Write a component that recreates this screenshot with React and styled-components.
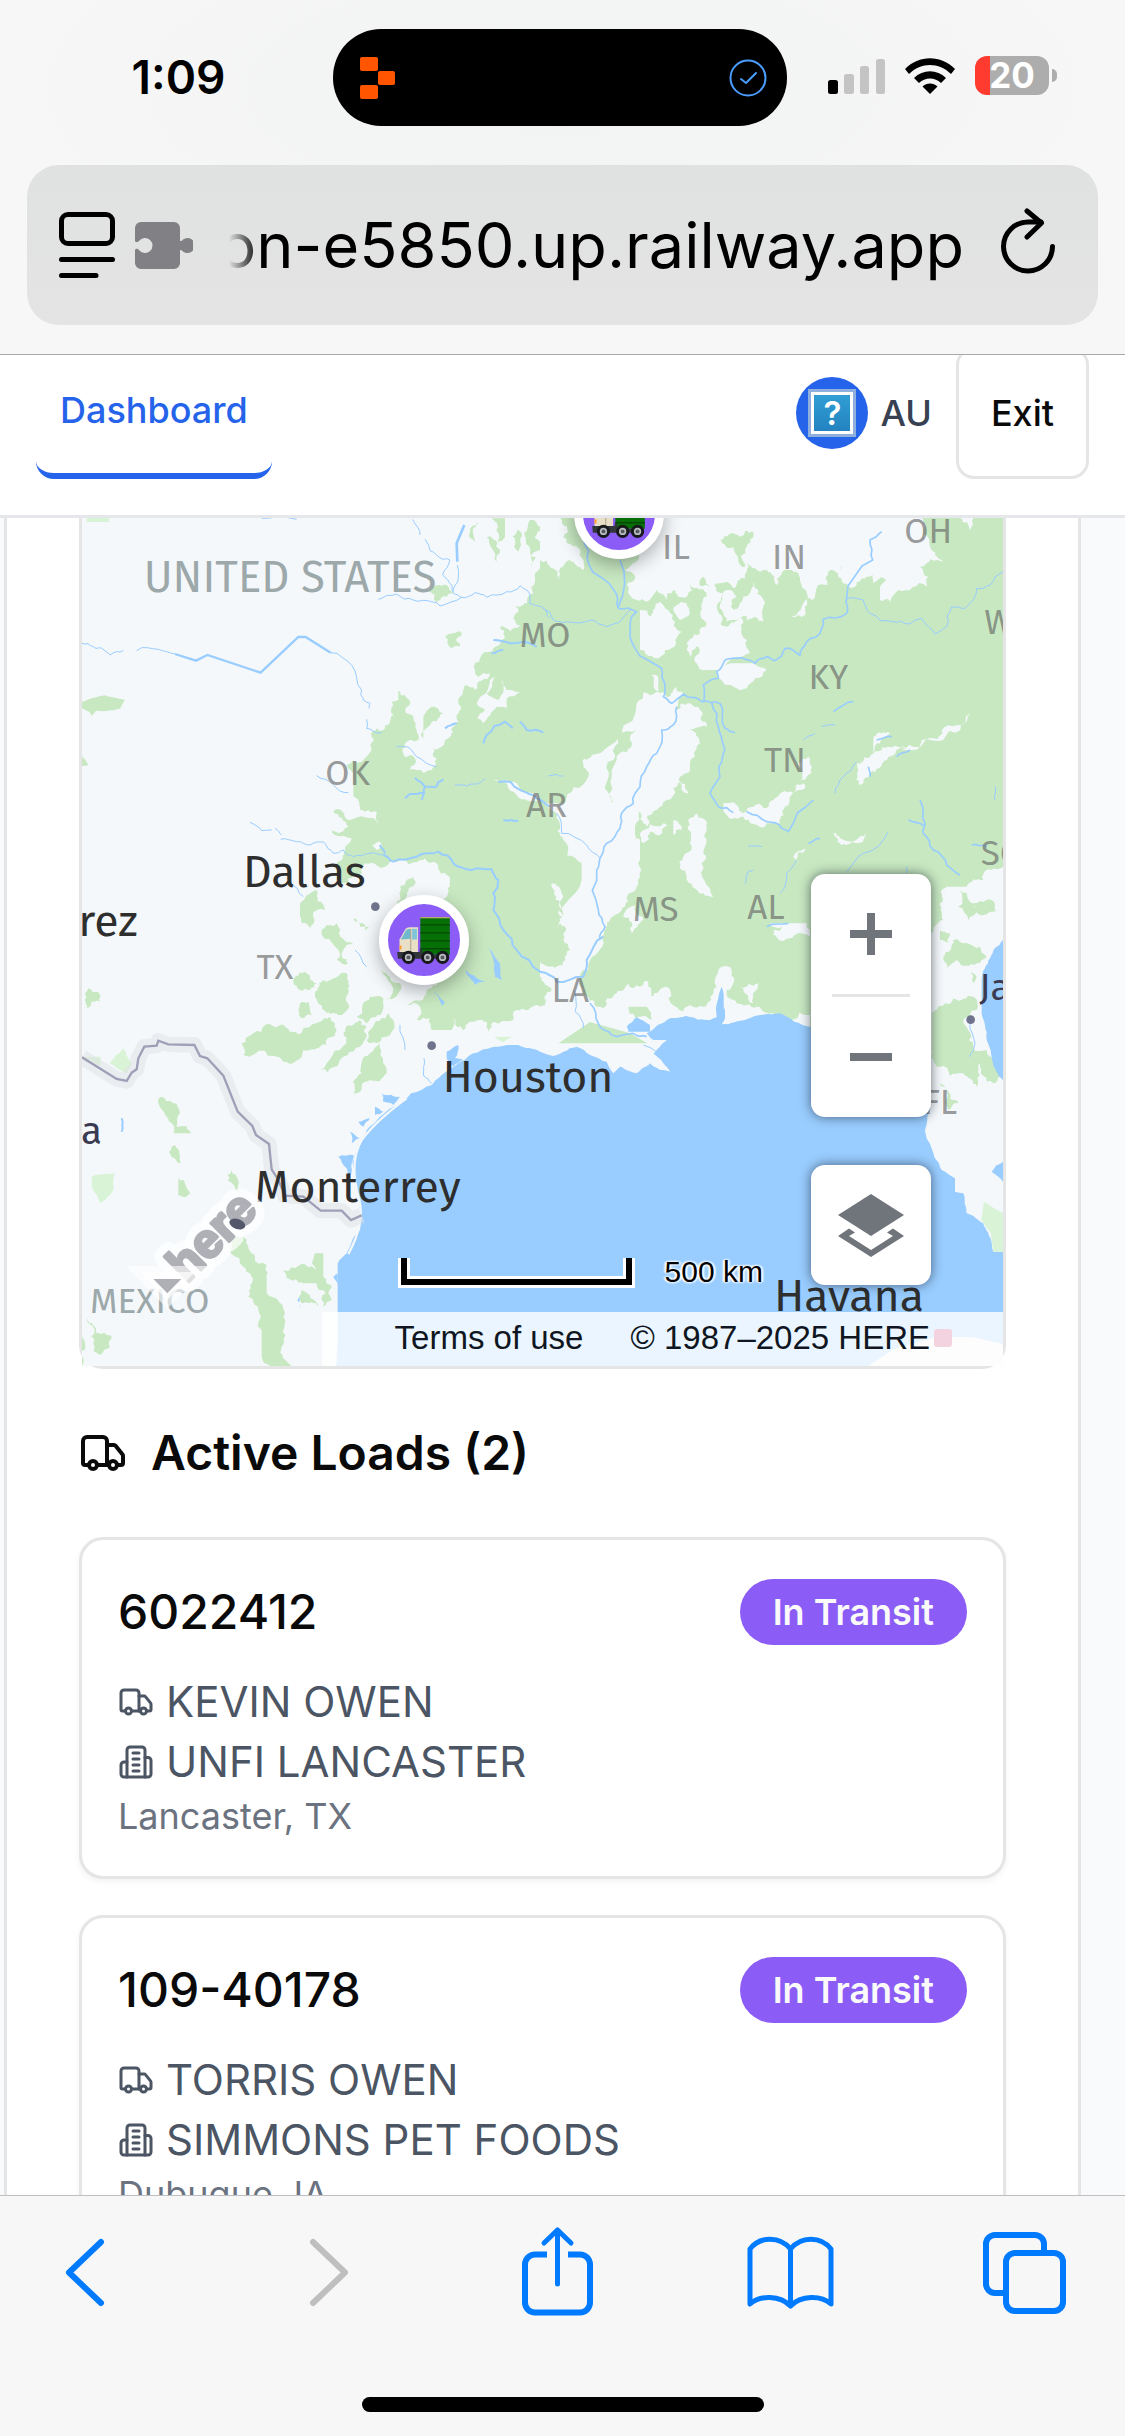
import React from "react";
import styled, { createGlobalStyle } from "styled-components";

const GlobalStyle = createGlobalStyle`
  * { box-sizing: border-box; }
  body { margin: 0; background: #f7f7f7; font-family: Inter, "Liberation Sans", sans-serif; }
  button { font: inherit; color: inherit; background: none; border: 0; padding: 0; margin: 0; cursor: pointer; }
  h2, h3, p { margin: 0; }
  svg { display: block; flex: none; }
`;

const Screen = styled.div`
  height: 100vh;
  display: flex;
  flex-direction: column;
  overflow: hidden;
`;

/* ---------- browser chrome ---------- */

const TopChrome = styled.header`
  flex: none;
  padding-top: 29px;
  background: radial-gradient(ellipse 50% 60% at 50% 25%, #f1f2f2, #f7f7f7);
  border-bottom: 1px solid #a9a9ab;
`;

const StatusBar = styled.div`
  display: grid;
  grid-template-columns: 1fr 454px 1fr;
  align-items: center;
  height: 97px;
  padding-right: 5px;
`;

const Clock = styled.time`
  padding-left: 24px;
  padding-bottom: 2px;
  text-align: center;
  font-size: 46px;
  line-height: 56px;
  font-weight: 600;
`;

const Island = styled.div`
  display: flex;
  align-items: center;
  justify-content: space-between;
  height: 97px;
  padding: 0 20px 0 27px;
  border-radius: 48px;
  background: #000;
`;

const StatusIcons = styled.div`
  display: flex;
  align-items: center;
  gap: 20px;
  padding-left: 41px;
  padding-bottom: 4px;
`;

const Battery = styled.div`
  display: flex;
  align-items: center;
  gap: 3px;
`;

const BatteryBody = styled.div`
  width: 74px;
  height: 39px;
  border-radius: 12px;
  background: linear-gradient(to right, #ff3b30 20%, #adadad 20%);
  color: #fff;
  font-size: 35px;
  line-height: 39px;
  font-weight: 700;
  text-align: center;
`;

const BatteryNub = styled.div`
  width: 5px;
  height: 13px;
  border-radius: 0 6px 6px 0;
  background: #adadad;
`;

const AddressBar = styled.div`
  display: flex;
  align-items: center;
  height: 160px;
  margin: 39px 27px 29px;
  padding: 0 42px 0 32px;
  border-radius: 32px;
  background: linear-gradient(#e0e1e1, #e4e4e4);
`;

const PageMenu = styled.button`
  display: flex;
  align-items: center;
  gap: 20px;
`;

const Address = styled.button`
  flex: 1;
  min-width: 0;
  display: flex;
  justify-content: flex-end;
  margin: 0 36px;
  overflow: hidden;
  font-size: 63px;
  line-height: 84px;
  white-space: nowrap;
  mask-image: linear-gradient(to right, transparent, #000 30px);
`;

/* ---------- web page ---------- */

const Viewport = styled.main`
  flex: 1;
  min-height: 0;
  overflow: hidden;
  background: #f9fafb;
`;

const Nav = styled.nav`
  display: flex;
  align-items: flex-end;
  justify-content: space-between;
  height: 163px;
  padding: 0 36px 36px;
  overflow: hidden;
  background: #fff;
  border-bottom: 3px solid #e5e7eb;
  font-size: 36px;
  line-height: 48px;
  font-weight: 500;
`;

const Tab = styled.a`
  display: flex;
  align-items: center;
  height: 132px;
  padding: 0 24px;
  border-bottom: 6px solid #2563eb;
  border-radius: 18px;
  color: #2563eb;
  text-decoration: none;
`;

const NavEnd = styled.div`
  display: flex;
  align-items: center;
  gap: 24px;
`;

const User = styled.div`
  display: flex;
  align-items: center;
  gap: 12px;
  color: #374151;
`;

const Avatar = styled.span`
  display: grid;
  place-items: center;
  width: 72px;
  height: 72px;
  border-radius: 50%;
  background: #2563eb;
`;

const UnknownGlyph = styled.span`
  display: grid;
  place-items: center;
  width: 48px;
  height: 48px;
  border: 3px solid #8fb0dc;
  background: linear-gradient(#31a0d6, #2280be);
  box-shadow: inset 0 0 0 3px #fff;
  color: #fff;
  font-size: 33px;
  line-height: 36px;
  font-weight: 600;
`;

const ExitButton = styled.button`
  height: 132px;
  padding: 0 32px;
  border: 3px solid #e5e5e5;
  border-radius: 18px;
  color: #0a0a0a;
`;

const Panel = styled.section`
  margin: 0 44px 0 4px;
  padding: 0 72px 72px;
  background: #fff;
  border: 0 solid #e5e5e5;
  border-width: 0 3px;
`;

const MapFrame = styled.div`
  border: 3px solid #e5e5e5;
  border-top: 0;
  border-radius: 0 0 24px 24px;
`;

const MapCanvas = styled.div`
  position: relative;
  height: 848px;
  overflow: hidden;
  font-family: "Liberation Sans", Arial, sans-serif;
  background: #f4f8fb;

  > svg { width: 100%; height: 100%; }
`;

const Pin = styled.button`
  position: absolute;
  left: ${(p) => p.$left}%;
  top: ${(p) => p.$top}px;
  display: grid;
  place-items: center;
  width: 90px;
  height: 90px;
  margin: -45px;
  border: 9px solid #fff;
  border-radius: 50%;
  background: #8b5cf6;
  box-shadow: 0 6px 18px rgba(0, 0, 0, 0.3);
`;

const MapControls = styled.div`
  position: absolute;
  right: 72px;
  bottom: 81px;
  display: grid;
  gap: 48px;
`;

const ControlGroup = styled.div`
  display: grid;
  justify-items: center;
  width: 120px;
  border-radius: 14px;
  background: #fff;
  box-shadow: 0 0 12px rgba(15, 22, 33, 0.6);
`;

const ControlButton = styled.button`
  display: grid;
  place-items: center;
  width: 120px;
  height: 120px;
`;

const Divider = styled.span`
  width: 78px;
  height: 3px;
  background: #e5e5e5;
`;

const Scale = styled.div`
  position: absolute;
  right: 240px;
  bottom: 78px;
  display: flex;
  align-items: center;
  gap: 30px;
  color: #000;
  font-size: 30px;
  line-height: 33px;
  text-shadow: 0 0 3px #fff, 0 0 3px #fff, 2px 0 2px #fff, -2px 0 2px #fff;
`;

const Copyright = styled.div`
  position: absolute;
  right: 0;
  bottom: 0;
  display: flex;
  align-items: center;
  height: 54px;
  padding: 0 51px 2px 73px;
  background: rgba(255, 255, 255, 0.8);
  color: #0f1621;
  font-size: 33px;
  line-height: 40px;

  a { margin-right: 47px; color: inherit; text-decoration: none; }
`;

const PinkMark = styled.span`
  width: 18px;
  height: 18px;
  margin-left: 4px;
  border-radius: 3px;
  background: #f3d3df;
`;

const SectionTitle = styled.h2`
  display: flex;
  align-items: center;
  gap: 24px;
  margin: 48px 0;
  color: #0a0a0a;
  font-size: 48px;
  line-height: 72px;
  font-weight: 600;
`;

const LoadList = styled.div`
  display: grid;
  gap: 36px;
`;

const LoadCard = styled.article`
  padding: 36px;
  border: 3px solid #e5e5e5;
  border-radius: 24px;
  background: #fff;
  box-shadow: 0 3px 6px rgba(0, 0, 0, 0.05);
`;

const LoadHead = styled.div`
  display: flex;
  align-items: center;
  justify-content: space-between;
  margin-bottom: 24px;
`;

const LoadNumber = styled.h3`
  color: #0a0a0a;
  font-size: 48px;
  line-height: 72px;
  font-weight: 500;
`;

const Badge = styled.span`
  padding: 9px 33px;
  border-radius: 33px;
  background: #8b5cf6;
  color: #fafafa;
  font-size: 36px;
  line-height: 48px;
  font-weight: 600;
`;

const LoadLine = styled.p`
  display: flex;
  align-items: center;
  gap: 12px;
  color: #4b5563;
  font-size: 42px;
  line-height: 60px;
`;

const LoadPlace = styled.p`
  color: #6b7280;
  font-size: 36px;
  line-height: 48px;
`;

/* ---------- bottom toolbar ---------- */

const Toolbar = styled.footer`
  flex: none;
  border-top: 1px solid #bfbfc1;
  background: #f7f7f7;
`;

const ToolRow = styled.div`
  display: flex;
  justify-content: space-between;
  padding: 28px 56px 77px 41px;
  color: #007aff;
`;

const Tool = styled.button`
  &:disabled { color: #bfbfbf; }
`;

const HomeIndicator = styled.div`
  width: 402px;
  height: 15px;
  margin: 0 auto 24px;
  border-radius: 8px;
  background: #000;
`;

/* ---------- icons ---------- */

const Line = ({ size, width = 2, children }) => (
  <svg width={size} height={size} viewBox="0 0 24 24" fill="none" stroke="currentColor"
    strokeWidth={width} strokeLinecap="round" strokeLinejoin="round" aria-hidden="true">
    {children}
  </svg>
);

const TruckIcon = ({ size }) => (
  <Line size={size}>
    <path d="M14 18V6a2 2 0 0 0-2-2H4a2 2 0 0 0-2 2v11a1 1 0 0 0 1 1h2" />
    <path d="M15 18H9" />
    <path d="M19 18h2a1 1 0 0 0 1-1v-3.65a1 1 0 0 0-.22-.624l-3.48-4.35A1 1 0 0 0 17.52 8H14" />
    <circle cx="17" cy="18" r="2" />
    <circle cx="7" cy="18" r="2" />
  </Line>
);

const BuildingIcon = ({ size }) => (
  <Line size={size}>
    <path d="M6 22V4a2 2 0 0 1 2-2h8a2 2 0 0 1 2 2v18Z" />
    <path d="M6 12H4a2 2 0 0 0-2 2v6a2 2 0 0 0 2 2h2" />
    <path d="M18 9h2a2 2 0 0 1 2 2v9a2 2 0 0 1-2 2h-2" />
    <path d="M10 6h4M10 10h4M10 14h4M10 18h4" />
  </Line>
);

const LogoIcon = () => (
  <svg width="35" height="42" viewBox="0 0 35 42" fill="#ff5500" aria-hidden="true">
    <rect width="18" height="14" rx="2" />
    <rect x="18" y="14" width="17" height="14" rx="2" />
    <rect y="28" width="18" height="14" rx="2" />
  </svg>
);

const CheckIcon = () => (
  <svg width="38" height="38" viewBox="0 0 38 38" fill="none" stroke="#4a9dff" strokeWidth="2"
    strokeLinecap="round" strokeLinejoin="round" aria-hidden="true">
    <circle cx="19" cy="19" r="17.5" />
    <path d="M12 20l5 4 10-10" />
  </svg>
);

const SignalIcon = () => (
  <svg width="57" height="36" viewBox="0 0 57 36" fill="#c4c4c4" aria-hidden="true">
    <rect y="22" width="10" height="14" rx="2.5" fill="#000" />
    <rect x="16" y="16" width="10" height="20" rx="2.5" />
    <rect x="32" y="8" width="9" height="28" rx="2.5" />
    <rect x="48" y="1" width="9" height="35" rx="2.5" />
  </svg>
);

const WifiIcon = () => (
  <svg width="50" height="36" viewBox="0 0 50 36" aria-hidden="true">
    <path d="M0 11C14-3.500 36-3.500 50 11l-4 5C34 4 16 4 4 16z" />
    <path d="M9 20c9-9 23-9 32 0l-5 5c-6-6-16-6-22 0z" />
    <path d="M17.500 28.500c4-4 11-4 15 0L25 36z" />
  </svg>
);

const ReaderIcon = () => (
  <svg width="56" height="66" viewBox="0 0 56 66" fill="none" stroke="#000" strokeWidth="5" strokeLinecap="round" aria-hidden="true">
    <rect x="2.500" y="2.500" width="51" height="29" rx="6.500" />
    <path d="M2.500 47.500h51M2.500 63.500H37" />
  </svg>
);

const PuzzleIcon = () => (
  <svg width="58" height="47" viewBox="0 0 58 47" fill="#808085" aria-hidden="true">
    <path d="M6 0h33a6 6 0 0 1 6 6v12c0 2 2 1 3-.5a7.500 7.500 0 1 1 0 12c-1-1.500-3-2.500-3-.5v12a6 6 0 0 1-6 6H6a6 6 0 0 1-6-6V28c1-2 3-1 4 0a7.500 7.500 0 1 0 0-9c-1 1-3 2-4 0V6a6 6 0 0 1 6-6z" />
  </svg>
);

const ReloadIcon = () => (
  <svg width="56" height="74" viewBox="0 0 56 74" fill="none" stroke="#000" strokeWidth="5" strokeLinecap="round" strokeLinejoin="round" aria-hidden="true">
    <path d="M52.500 38.500A24.500 24.500 0 1 1 28 14h13" />
    <path d="M27 3l14.500 12L27 29" />
  </svg>
);

const ToolIcon = ({ children }) => (
  <svg width="88" height="96" viewBox="0 0 88 96" overflow="visible" fill="none" stroke="currentColor"
    strokeWidth="6" strokeLinecap="round" strokeLinejoin="round" aria-hidden="true">
    {children}
  </svg>
);

const GarbageTruck = () => (
  <svg width="53" height="47" viewBox="978 1220 159 142" aria-hidden="true">
    <path d="M985 1330v-42l18-32q4-5 12-5h26v80z" fill="#e9dfc6" />
    <path d="M989 1288l16-28q3-4 9-4h5v30z" fill="#6fb9cf" />
    <rect x="1023" y="1256" width="15" height="32" fill="#7fc6d8" />
    <path d="M1019 1256v74" stroke="#a9a08c" strokeWidth="3" />
    <rect x="985" y="1306" width="6" height="12" fill="#ff9a2e" />
    <rect x="1048" y="1222" width="89" height="112" fill="#067006" />
    <path d="M1048 1222h89" stroke="#b6a96b" strokeWidth="4" />
    <path d="M1048 1244h89M1048 1268h89M1048 1292h89M1048 1316h89" stroke="#034803" strokeWidth="4" />
    <path d="M978 1326h68v-8h8v16h80v12H980z" fill="#33363b" />
    {[1012, 1070, 1115].map((x) => (
      <g key={x}>
        <circle cx={x} cy="1342" r="20" fill="#17191c" />
        <circle cx={x} cy="1342" r="11" fill="#b9bcc0" />
        <circle cx={x} cy="1342" r="6" fill="#55585c" />
      </g>
    ))}
  </svg>
);

/* ---------- map drawing ---------- */

const parse = (s) => s.trim().split(/\s+/).map((p) => p.split(",").map(Number));

// Breaks every edge into short jagged pieces, the same way on each render.
const rough = (text, amount, closed, depth = 3) => {
  let pts = parse(text);
  let seed = Math.abs(pts[0][0] * 31 + pts[0][1] * 17 + pts.length) + 7;
  const rand = () => {
    seed = (seed * 16807) % 2147483647;
    return seed / 2147483647 - 0.5;
  };
  for (let d = 0; d < depth; d += 1) {
    const out = [];
    pts.forEach((p, i) => {
      out.push(p);
      if (!closed && i === pts.length - 1) return;
      const q = pts[(i + 1) % pts.length];
      const len = Math.hypot(q[0] - p[0], q[1] - p[1]);
      const onFrame = closed && (p[0] === q[0] || p[1] === q[1]);
      if (len < 12 || onFrame) return;
      const k = rand() * amount * 2;
      out.push([(p[0] + q[0]) / 2 - (q[1] - p[1]) * k, (p[1] + q[1]) / 2 + (q[0] - p[0]) * k]);
    });
    pts = out;
  }
  return `M${pts.map((p) => `${Math.round(p[0])} ${Math.round(p[1])}`).join("L")}${closed ? "Z" : ""}`;
};

const Shapes = ({ list, fill, amount = 0.28 }) => (
  <g fill={fill}>{list.map((s) => <path key={s} d={rough(s, amount, true)} />)}</g>
);
const Rivers = ({ list, width = 4, amount = 0.14 }) => (
  <path d={list.map((s) => rough(s, amount, false, 2)).join("")} fill="none" stroke="#99cdff" strokeWidth={width} strokeLinejoin="round" />
);

const LAND = "#f4f8fb";
const FOREST = "#c7e8c1";
const WATER = "#99cdff";

const westForest = [
  "1425,150 1410,175 1395,215 1390,250 1372,280 1325,285 1345,305 1330,325 1350,345 1290,350 1305,380 1270,415 1245,425 1215,460 1225,500 1260,490 1215,540 1185,525 1170,560 1160,615 1165,635 1145,655 1125,690 1090,715 1100,745 1085,780 1060,800 1020,780 1035,745 1003,740 1005,710 1045,690 1040,660 1030,620 1005,600 1018,570 985,542 985,570 965,575 970,615 940,660 905,665 912,690 905,720 880,750 830,765 850,800 850,850 870,900 920,905 925,945 840,930 800,898 790,905 835,950 785,960 845,985 825,1020 800,1060 800,1110 830,1120 850,1100 885,1060 960,1055 1000,1050 1065,1045 1100,1060 1140,1110 1130,1160 1150,1250 1120,1400 1070,1440 1010,1485 1050,1490 1040,1530 1080,1525 1085,1560 1145,1560 1150,1525 1180,1560 1200,1535 1230,1530 1255,1565 1270,1535 1330,1530 1340,1500 1390,1490 1425,1440 1445,1440 1445,150",
  "1200,65 1225,35 1215,95", "1265,25 1305,25 1305,80 1285,100", "1258,70 1290,120 1280,155 1268,120",
  "1380,30 1415,50 1410,120 1385,175 1378,110 1362,70", "1340,50 1355,80 1345,125 1332,110",
  "1075,240 1130,225 1150,250 1100,280", "1125,380 1175,370 1160,395 1170,410 1145,415",
  "1060,620 1085,590 1120,610 1075,650 1060,690", "990,1130 1030,1100 1010,1150 980,1180",
  "690,1180 740,1140 765,1200 720,1260 690,1220", "850,1225 870,1250 905,1250 880,1270",
  "755,1260 800,1240 850,1300 820,1320 835,1360 800,1350",
  "735,1460 760,1410 830,1390 835,1450 805,1515 760,1500", "690,1480 715,1475 725,1515 695,1525",
  "670,1415 705,1385 740,1420 720,1440", "515,1600 550,1570 630,1545 660,1565 720,1550 780,1520 800,1560 750,1610 700,1620 640,1655 520,1635",
  "860,1520 900,1460 940,1465 935,1510 890,1540", "820,1570 870,1530 890,1580 820,1640 750,1680 830,1600",
  "900,1560 960,1510 970,1530 920,1600 890,1590", "900,1630 930,1600 950,1690 900,1710 850,1750 875,1690",
  "935,1380 960,1400 990,1420 945,1470", "45,1470 55,1435 92,1475 50,1495",
  "275,1760 330,1810 320,1850 370,1870 310,1870 290,1820", "305,1910 315,1905 330,1960",
  "325,2005 360,2050 325,2055", "485,1980 505,2010 510,2050 495,2040",
  "440,2180 530,2190 555,2240 590,2310 590,2350 640,2420 635,2510 665,2568 600,2568 575,2540 575,2460 535,2360 540,2290 510,2260",
  "640,2280 690,2265 740,2280 735,2230 760,2230 760,2300 785,2370 760,2390 740,2320 700,2320 650,2305",
  "695,2340 745,2390 700,2380", "50,2425 80,2470 125,2480 120,2510 90,2535 70,2500",
  "36,2480 45,2500 36,2568",
];

const westClearings = [
  "1260,510 1275,500 1250,550 1285,570 1300,545 1295,510 1310,540 1350,545 1310,565 1310,595 1280,590 1240,640 1222,625 1245,600 1220,580",
  "1270,808 1330,815 1360,845 1400,850 1440,880 1445,920 1410,870 1340,855", "905,1005 930,995 935,1010 920,1020",
];

const northWestPatches = ["36,575 105,556 165,570 150,596 78,602 65,618 58,605 36,595", "36,738 55,765 36,768"];

const eastClearings = [
  "0,24 60,24 70,80 110,110 130,180 90,150 60,210 30,170 0,150",
  "370,24 1145,24 1150,70 1170,110 1210,155 1140,170 1165,200 1160,230 1075,240 1050,275 1020,270 1020,230 1040,210 1000,220 1005,180 985,200 945,230 910,220 905,165 895,190 865,185 862,225 830,235 825,260 800,265 795,315 755,320 790,280 785,225 755,180 710,225 680,180 645,175 620,160 615,205 585,235 560,215 520,230 490,200 480,240 450,220 440,260 400,240 380,270 350,240 320,275 290,270 260,225 285,205 245,180 280,160 330,90",
  "1260,24 1300,24 1290,60", "300,300 335,320 360,275 385,300 405,335 425,365 408,400 375,420 345,445 300,420",
  "500,340 560,350 600,320 620,390 630,430 590,440 540,480 500,480 470,460 480,420 455,390 480,370",
  "600,280 630,250 640,215 665,260 670,335 620,330 590,300", "530,490 580,460 640,460 680,480 620,535 580,530",
  "470,230 500,260 485,300 500,340 545,335 530,290 550,250 520,225", "560,240 590,260 580,300 620,320 560,335 545,300",
  "440,420 460,380 470,410 450,440", "400,300 440,280 450,310 420,330", "525,60 560,110 590,150 560,140",
  "335,495 355,500 355,545 340,530",
  "350,545 380,560 410,530 430,550 410,600 450,580 480,600 500,650 450,660 480,700 450,780 420,800 380,870 350,900 320,950 290,900 285,950 300,990 300,1050 290,1130 255,1190 210,1230 190,1275 150,1350 130,1450 170,1490 190,1495 230,1450 265,1420 280,1435 325,1415 335,1460 380,1430 385,1465 430,1505 450,1485 490,1490 520,1450 545,1370 575,1380 560,1440 590,1480 650,1490 700,1510 810,1515 810,1600 -60,1660 -60,1500 0,1490 15,1485 35,1440 0,1400 0,1355 50,1370 90,1320 70,1290 60,1230 125,1110 125,1060 70,990 55,930 10,880 75,880 145,800 130,770 155,735 290,580",
  "550,880 620,905 680,895 700,870 760,850 790,820 795,835 735,890 720,940 680,940 610,920 560,915",
  "950,760 1000,730 1060,710 1110,720 1040,750 990,790 960,825 945,810", "1000,680 1050,670 1020,700 1000,730",
  "1070,720 1150,700 1215,650 1290,610 1210,690 1120,720",
  "470,910 500,950 495,1010 485,1060 520,1160 490,1150 440,1100 430,1040 455,1010 445,960",
  "1389,1070 1340,1080 1330,1110 1280,1130 1220,1130 1200,1180 1210,1230 1170,1290 1170,2000 1389,2000",
  "250,1220 290,1180 310,1230 275,1270", "400,930 425,960 400,975", "690,1240 800,1240 810,1280 740,1285",
  "300,970 370,940 395,945 330,965 310,1000", "35,1120 65,1150 70,1220 50,1260 60,1180", "410,805 445,850 425,840",
  "775,760 805,740 800,800 780,810", "600,1430 655,1420 640,1480 615,1450", "700,1260 770,1262 750,1285 710,1282",
  "760,1040 795,1015 770,1060", "880,970 900,985 980,970 920,1005",
];

const eastPatches = [
  "220,750 235,700 285,660 270,690 230,750 225,885 212,860", "265,1490 320,1490 335,1530 290,1525",
  "540,90 600,80 640,65 620,110 615,170 595,150 580,110",
  "1240,1290 1320,1310 1340,1340 1310,1360 1250,1350 1220,1380 1210,1340", "1200,1262 1230,1270 1225,1300 1200,1290",
  "1175,1510 1240,1465 1300,1460 1310,1500 1270,1530 1300,1610 1340,1620 1380,1700 1360,1720 1320,1660 1310,1730 1270,1690 1200,1670 1175,1620",
  "1200,1720 1220,1740 1255,1780 1225,1800", "1300,1180 1340,1170 1370,1210 1320,1215", "1260,1140 1310,1200 1285,1230",
  "1290,1380 1310,1400 1300,1420",
];

const coastPatches = ["65,2000 135,1990 130,2040 90,2080 65,2030", "120,1660 160,1615 185,1660 170,1690", "50,24 117,24 117,36 50,36", "40,1640 92,1640 90,1670", "1272,1580 1325,1580 1300,1596"];

const gulf =
  "797,2568 803,2500 803,2260 830,2230 870,2160 875,2120 865,2060 848,1960 860,1920 890,1860 970,1790 1085,1725 1110,1700 1165,1660 1200,1635 1240,1618 1310,1605 1345,1605 1410,1625 1450,1638 1480,1625 1520,1610 1560,1635 1610,1655 1630,1690 1650,1670 1700,1690 1740,1660 1770,1680 1800,1685 1780,1660 1750,1630 1790,1590 1750,1590 1730,1570 1800,1525 1850,1518 1920,1530 1940,1522 1955,1430 1965,1525 1955,1543 2030,1528 2130,1510 2220,1550 2290,1620 2540,1760 2575,1810 2565,1860 2585,1915 2615,1980 2655,2005 2655,2045 2680,2050 2690,2110 2740,2140 2765,2200 2770,2225 2799,2225 2799,2568";

const waterPatches = [
  "2799,1290 2760,1345 2735,1410 2735,1500 2750,1590 2799,1710", "2799,1955 2765,1985 2799,2015",
  "1670,1550 1700,1522 1740,1545 1740,1565 1675,1565", "1255,1315 1290,1360 1295,1410 1275,1400 1270,1350",
  "1185,1380 1230,1410 1245,1415 1215,1425", "1090,1445 1125,1475 1115,1488", "1130,1625 1165,1605 1155,1645 1180,1650 1150,1670 1130,1645",
  "935,1750 990,1760 970,1785 940,1775", "915,1790 940,1805 915,1815", "865,1835 900,1825 880,1850", "840,1865 870,1885 845,1900",
  "805,1940 850,1935 845,1960 835,2010 830,1975", "790,2300 803,2290 803,2325", "682,2370 690,2360 692,2395",
];

const westRivers = [
  "36,400 70,410 95,415 120,435 160,422", "200,422 265,418 315,432", "782,428 845,465 875,540 880,570 900,580 897,595",
  "890,628 890,655 935,668", "925,268 980,252 1030,270 1085,275 1110,288 1175,262 1215,248 1250,262 1310,245 1350,227 1378,250 1378,280 1415,290 1440,325",
  "1028,28 1050,75", "1065,88 1080,122 1120,148 1140,150 1118,195 1145,225 1150,250 1175,262", "1162,165 1165,205 1148,245",
  "540,937 575,962 605,960", "615,955 635,975", "632,988 680,995 720,1005 760,996 790,1030 820,1020 850,1040 900,1030 940,1035",
  "740,797 790,825 835,848", "1155,825 1190,828 1245,805", "980,710 1010,710 1040,740 1100,770", "575,25 680,28",
  "855,1320 890,1370", "990,1545 1005,1620", "1062,1645 1060,1695 1085,1720", "660,1115 700,1160",
];
const westWideRivers = [
  "940,1035 970,1055 1040,1040 1105,1025 1150,1060 1205,1080 1265,1078 1285,1110 1270,1150 1270,1200 1300,1260 1340,1320 1410,1385 1460,1415 1540,1400 1550,1350 1600,1280",
  "1035,803 1065,830 1055,870", "1005,865 1020,852 1060,848", "1065,830 1095,832 1120,808", "1285,815 1320,815 1350,840 1390,855 1440,890",
  "1240,700 1250,675 1305,635 1328,655", "1350,635 1370,660 1420,668", "1270,390 1320,400 1400,410", "1265,430 1300,420",
  "1125,655 1160,640", "155,1825 155,1865", "1300,930 1345,932", "930,1005 945,1030",
];
const eastRivers = [
  "5,290 40,330 80,335 155,330 200,350 245,330 270,300", "920,265 970,270 990,310 1060,335 1105,342 1145,325 1185,372 1220,350 1235,290 1275,295 1310,235 1350,225 1389,185",
  "885,850 910,800 950,755", "50,910 65,970 140,1005 180,1045", "790,690 825,670", "845,650 885,645", "770,1050 740,1090 720,1150",
  "920,1085 970,1030 1045,965", "625,1010 665,1010", "615,1120 625,1085 640,1080", "25,798 70,798", "1365,830 1365,870",
  "100,1440 105,1505 130,1555", "310,1605 390,1660", "1100,1070 1100,1090", "1290,1540 1305,1600 1288,1640",
];
const eastWideRivers = [
  "130,90 145,160 225,245 235,295 290,305 270,380 285,415 365,475 375,530 370,560 395,580 430,552 485,575 515,578 540,580 555,655 585,668",
  "240,150 235,290", "1025,65 990,90 998,150 920,265 920,310 850,328 845,355 800,395 780,437 735,415 705,452 680,440 645,460 590,445 555,450 530,485 535,505 490,525 490,575",
  "515,578 535,650 552,710 548,740 540,800 510,850 535,890 580,908", "620,905 680,935 710,940 745,965 820,870",
  "410,590 400,645 365,660 350,730 320,770 300,830 280,880 245,910 240,955 200,1000 180,1045 170,1080 175,1200 195,1250 180,1290",
  "985,770 990,800", "1010,690 1055,680", "1070,740 1110,720", "880,605 940,575", "1140,870 1155,940 1150,970 1180,1020 1220,1065 1260,1095",
  "1105,930 1155,950", "805,1000 840,985", "150,1480 175,1540 215,1575 280,1570 320,1580", "1295,1005 1340,1010", "680,1250 745,1240",
];

const border =
  "M36 1642L140 1707L170 1713L185 1688L200 1678L205 1645L223 1610L260 1607L265 1592L295 1603L373 1605L390 1638L412 1645L460 1697L503 1805L547 1848L558 1875L597 1902L605 1978L625 2010L645 2057L700 2060L752 2102L815 2102L843 2130L875 2116";

const states = [
  ["MO", 1425, 410], ["IL", 1818, 147], ["IN", 2157, 177], ["OH", 2575, 98], ["WV", 2815, 372], ["KY", 2275, 537],
  ["TN", 2145, 785], ["OK", 833, 825], ["AR", 1430, 920], ["MS", 1757, 1233], ["AL", 2088, 1227], ["SC", 2790, 1065],
  ["TX", 615, 1407], ["LA", 1501, 1475], ["FL", 2610, 1811],
];

const cities = [
  ["Dallas", 703, 1131], ["Houston", 1374, 1745], ["Monterrey", 863, 2075], ["Havana", 2337, 2402],
];

const MapArt = () => (
  <svg viewBox="36 24 2763 2544" preserveAspectRatio="xMidYMid slice" role="img" aria-label="Map of the southern United States"
    fontFamily="'Fira Sans', 'Noto Sans', 'Open Sans', sans-serif">
    <rect x="0" y="0" width="2900" height="2700" fill={LAND} />
    <Shapes list={westForest} fill={FOREST} />
    <Shapes list={northWestPatches} fill={FOREST} amount={0.05} />
    <Shapes list={westClearings} fill={LAND} amount={0.15} />
    <g transform="translate(1410 0)">
      <path d="M0 0H1389V1600H0Z" fill={FOREST} />
      <Shapes list={eastClearings} fill={LAND} />
      <Shapes list={eastPatches} fill={FOREST} />
    </g>
    <Shapes list={coastPatches} fill="#d9f3d6" amount={0.08} />
    <Shapes list={[gulf]} fill={WATER} amount={0.07} />
    <Shapes list={waterPatches} fill={WATER} amount={0.12} />
    <path d="M2395 2568l75-50 130-38 110 2 89 20v66z" fill="#f0f6ee" />
    <path d="M2742 2075l30 20 27 15v115h-29l-8-55-28-40z" fill="#d9f3d6" />
    <path d="M835 2232Q885 2140 868 2070Q835 1960 875 1890Q920 1830 1010 1765" fill="none" stroke={LAND} strokeWidth="7" />
    <Rivers list={westRivers} width={3} />
    <Rivers list={westWideRivers} width={6} />
    <path d="M315 432L378 452L412 435L572 488L685 381H707L782 428" fill="none" stroke={WATER} strokeWidth="7" />
    <path d="M1183 45L1160 100L1162 155" fill="none" stroke={WATER} strokeWidth="8" />
    <g transform="translate(1410 0)">
      <Rivers list={eastRivers} width={3} />
      <Rivers list={eastWideRivers} width={5} />
    </g>
    <path d={border} fill="none" stroke="#dfe2e6" strokeOpacity="0.5" strokeWidth="46" strokeLinejoin="round" />
    <path d={border} fill="none" stroke="#9f9fb8" strokeWidth="7" />

    <g fill="#6f748c">
      <circle cx="916" cy="1190" r="13" />
      <circle cx="1085" cy="1607" r="13" />
      <circle cx="2702" cy="1529" r="13" />
    </g>
    <g fill="#646464" fillOpacity="0.65" fontSize="105" textAnchor="middle">
      {states.map(([name, x, y]) => <text key={name} x={x} y={y}>{name}</text>)}
    </g>
    <g fill="#9ca8aa" textAnchor="middle">
      <text x="660" y="246" fontSize="131">UNITED STATES</text>
      <text x="239" y="2408" fontSize="106">MEXICO</text>
    </g>
    <g fill="#2e2e2e" fontSize="134" textAnchor="middle">
      {cities.map(([name, x, y]) => <text key={name} x={x} y={y}>{name}</text>)}
      <text x="203" y="1278" textAnchor="end">Juárez</text>
      <text x="96" y="1901" textAnchor="end" fill="#3a3a52" fontSize="116">Chihuahua</text>
      <text x="2728" y="1471" textAnchor="start" fill="#3a3a52" fontSize="110">Jacksonville</text>
    </g>

    <g transform="translate(350 2322) rotate(-45)" fontFamily="'Liberation Sans', sans-serif" fontWeight="700" fontSize="146" strokeLinejoin="round">
      <text stroke="#fff" strokeOpacity="0.7" strokeWidth="60" fill="#fff">here</text>
      <text fill="#aeb0b6" stroke="#aeb0b6" strokeWidth="9">here</text>
    </g>
    <path d="M210 2286H375L292 2370Z" fill="#fff" fillOpacity="0.7" stroke="#fff" strokeOpacity="0.6" strokeWidth="36" />
    <path d="M250 2307H375L334 2307L292 2350Z" fill="#aeb0b6" />
    <ellipse cx="502" cy="2142" rx="25" ry="15" transform="rotate(20 502 2142)" fill="#53596b" />
  </svg>
);

const ScaleBar = () => (
  <svg width="237" height="33" viewBox="0 0 237 33" fill="none" aria-hidden="true">
    <path d="M6 3V27H231V3" stroke="#fff" strokeWidth="12" />
    <path d="M6 3V27H231V3" stroke="#000" strokeWidth="6" />
  </svg>
);

const loads = [
  { number: "6022412", driver: "KEVIN OWEN", receiver: "UNFI LANCASTER", place: "Lancaster, TX" },
  { number: "109-40178", driver: "TORRIS OWEN", receiver: "SIMMONS PET FOODS", place: "Dubuque, IA" },
];

export default function App() {
  return (
    <Screen>
      <GlobalStyle />
      <TopChrome>
        <StatusBar>
          <Clock>1:09</Clock>
          <Island><LogoIcon /><CheckIcon /></Island>
          <StatusIcons>
            <SignalIcon />
            <WifiIcon />
            <Battery><BatteryBody>20</BatteryBody><BatteryNub /></Battery>
          </StatusIcons>
        </StatusBar>
        <AddressBar>
          <PageMenu aria-label="Page menu"><ReaderIcon /><PuzzleIcon /></PageMenu>
          <Address><span>on-e5850.up.railway.app</span></Address>
          <button aria-label="Reload"><ReloadIcon /></button>
        </AddressBar>
      </TopChrome>

      <Viewport>
        <Nav>
          <Tab href="#dashboard">Dashboard</Tab>
          <NavEnd>
            <User><Avatar><UnknownGlyph>?</UnknownGlyph></Avatar>AU</User>
            <ExitButton>Exit</ExitButton>
          </NavEnd>
        </Nav>

        <Panel>
          <MapFrame>
            <MapCanvas>
              <MapArt />
              <Pin $left={58.3} $top={-4} aria-label="Load 109-40178"><GarbageTruck /></Pin>
              <Pin $left={37.1} $top={422} aria-label="Load 6022412"><GarbageTruck /></Pin>
              <Scale><ScaleBar />500 km</Scale>
              <MapControls>
                <ControlGroup>
                  <ControlButton aria-label="Zoom in">
                    <svg width="42" height="42" viewBox="0 0 42 42" fill="#70747b"><path d="M17 0h8v17h17v8H25v17h-8V25H0v-8h17z" /></svg>
                  </ControlButton>
                  <Divider />
                  <ControlButton aria-label="Zoom out">
                    <svg width="42" height="8" viewBox="0 0 42 8" fill="#70747b"><path d="M0 0h42v8H0z" /></svg>
                  </ControlButton>
                </ControlGroup>
                <ControlGroup>
                  <ControlButton aria-label="Map layers">
                    <svg width="66" height="63" viewBox="0 0 66 63" fill="#70747b">
                      <path d="M33 0l33 21-33 21L0 21z" />
                      <path d="M11 34.500L0 42l33 21 33-21-11-7.500-6 4 6 3.500L33 56 11 42l6-3.500z" />
                    </svg>
                  </ControlButton>
                </ControlGroup>
              </MapControls>
              <Copyright>
                <a href="#terms">Terms of use</a>
                <span>© 1987–2025 HERE</span>
                <PinkMark />
              </Copyright>
            </MapCanvas>
          </MapFrame>

          <SectionTitle><TruckIcon size={48} />Active Loads (2)</SectionTitle>
          <LoadList>
            {loads.map((load) => (
              <LoadCard key={load.number}>
                <LoadHead>
                  <LoadNumber>{load.number}</LoadNumber>
                  <Badge>In Transit</Badge>
                </LoadHead>
                <LoadLine><TruckIcon size={36} />{load.driver}</LoadLine>
                <LoadLine><BuildingIcon size={36} />{load.receiver}</LoadLine>
                <LoadPlace>{load.place}</LoadPlace>
              </LoadCard>
            ))}
          </LoadList>
        </Panel>
      </Viewport>

      <Toolbar>
        <ToolRow>
          <Tool aria-label="Back"><ToolIcon><path d="M60 18L28 48.500L60 79" /></ToolIcon></Tool>
          <Tool aria-label="Forward" disabled><ToolIcon><path d="M37 18L69 48.500L37 79" /></ToolIcon></Tool>
          <Tool aria-label="Share">
            <ToolIcon>
              <path d="M36 30.500H24a10 10 0 0 0-10 10v38a10 10 0 0 0 10 10h45a10 10 0 0 0 10-10v-38a10 10 0 0 0-10-10H57" strokeLinecap="butt" />
              <path d="M46.500 60V6M33 19L46.500 6L60 19" strokeWidth="5" />
            </ToolIcon>
          </Tool>
          <Tool aria-label="Bookmarks">
            <ToolIcon><path d="M4 80V25C14 12 34 12 44.500 25C55 12 75 12 85 25V80C75 71 55 71 44.500 82C34 71 14 71 4 80ZM44.500 25V82" strokeWidth="5" /></ToolIcon>
          </Tool>
          <Tool aria-label="Tabs">
            <ToolIcon>
              <rect x="25" y="29" width="57" height="58" rx="9" />
              <path d="M25 69H14a9 9 0 0 1-9-9V20a9 9 0 0 1 9-9h40a9 9 0 0 1 9 9v9" />
            </ToolIcon>
          </Tool>
        </ToolRow>
        <HomeIndicator />
      </Toolbar>
    </Screen>
  );
}
